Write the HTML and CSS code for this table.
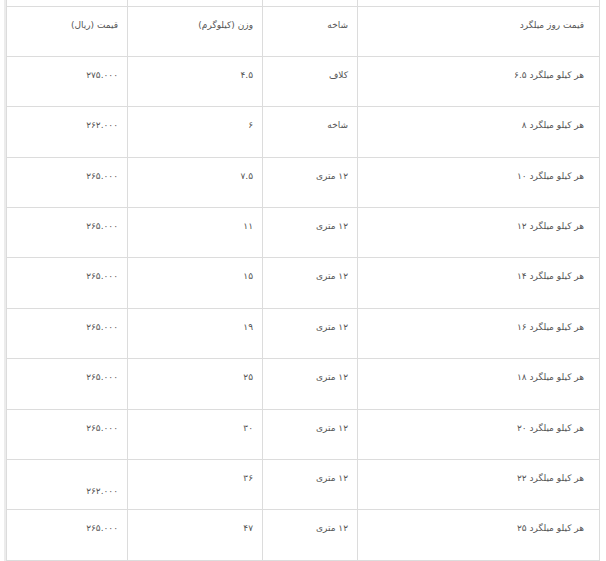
FILE: index.html
```html
<!DOCTYPE html>
<html lang="fa" dir="rtl">
<head>
<meta charset="utf-8">
<link rel="stylesheet" href="styles.css">
</head>
<body>
<div class="frame">
<table class="prices">
<colgroup>
<col class="c-name"><col class="c-type"><col class="c-weight"><col class="c-price">
</colgroup>
<tbody>
<tr class="cut"><td></td><td></td><td></td><td></td></tr>
<tr><td class="name">قیمت روز میلگرد</td><td>شاخه</td><td>وزن (کیلوگرم)</td><td>قیمت (ریال)</td></tr>
<tr><td class="name">هر کیلو میلگرد ۶.۵</td><td>کلاف</td><td>۴.۵</td><td>۲۷۵.۰۰۰</td></tr>
<tr><td class="name">هر کیلو میلگرد ۸</td><td>شاخه</td><td>۶</td><td>۲۶۲.۰۰۰</td></tr>
<tr><td class="name">هر کیلو میلگرد ۱۰</td><td>۱۲ متری</td><td>۷.۵</td><td>۲۶۵.۰۰۰</td></tr>
<tr><td class="name">هر کیلو میلگرد ۱۲</td><td>۱۲ متری</td><td>۱۱</td><td>۲۶۵.۰۰۰</td></tr>
<tr><td class="name">هر کیلو میلگرد ۱۴</td><td>۱۲ متری</td><td>۱۵</td><td>۲۶۵.۰۰۰</td></tr>
<tr><td class="name">هر کیلو میلگرد ۱۶</td><td>۱۲ متری</td><td>۱۹</td><td>۲۶۵.۰۰۰</td></tr>
<tr><td class="name">هر کیلو میلگرد ۱۸</td><td>۱۲ متری</td><td>۲۵</td><td>۲۶۵.۰۰۰</td></tr>
<tr><td class="name">هر کیلو میلگرد ۲۰</td><td>۱۲ متری</td><td>۳۰</td><td>۲۶۵.۰۰۰</td></tr>
<tr><td class="name">هر کیلو میلگرد ۲۲</td><td>۱۲ متری</td><td>۳۶</td><td class="low">۲۶۲.۰۰۰</td></tr>
<tr><td class="name">هر کیلو میلگرد ۲۵</td><td>۱۲ متری</td><td>۴۷</td><td>۲۶۵.۰۰۰</td></tr>
</tbody>
</table>
</div>
</body>
</html>
```
FILE: styles.css
```css
html, body {
  margin: 0;
  padding: 0;
  background: #ffffff;
}
.frame {
  width: 606px;
  height: 561px;
  overflow: hidden;
  direction: ltr;
  padding-left: 6px;
  box-sizing: border-box;
}
.prices {
  direction: rtl;
  border-collapse: collapse;
  table-layout: fixed;
  width: 594px;
  font-family: "DejaVu Sans", "Noto Sans", sans-serif;
  font-size: 9px;
  color: #555;
  box-shadow: -2px 0 0 #ececec;
}
.c-name { width: 242px; }
.c-type { width: 95px; }
.c-weight { width: 135px; }
.c-price { width: 121px; }
.prices td {
  border: 1px solid #dcdcdc;
  height: 50.4px;
  padding: 11px 9px 0 9px;
  vertical-align: top;
  text-align: right;
  line-height: 14px;
  box-sizing: border-box;
  white-space: nowrap;
}
.prices td.name {
  padding-right: 15px;
}
.prices tr.cut td {
  height: 6px;
  padding: 0;
  border-top: none;
}
.prices td.low {
  padding-top: 24px;
}
```
